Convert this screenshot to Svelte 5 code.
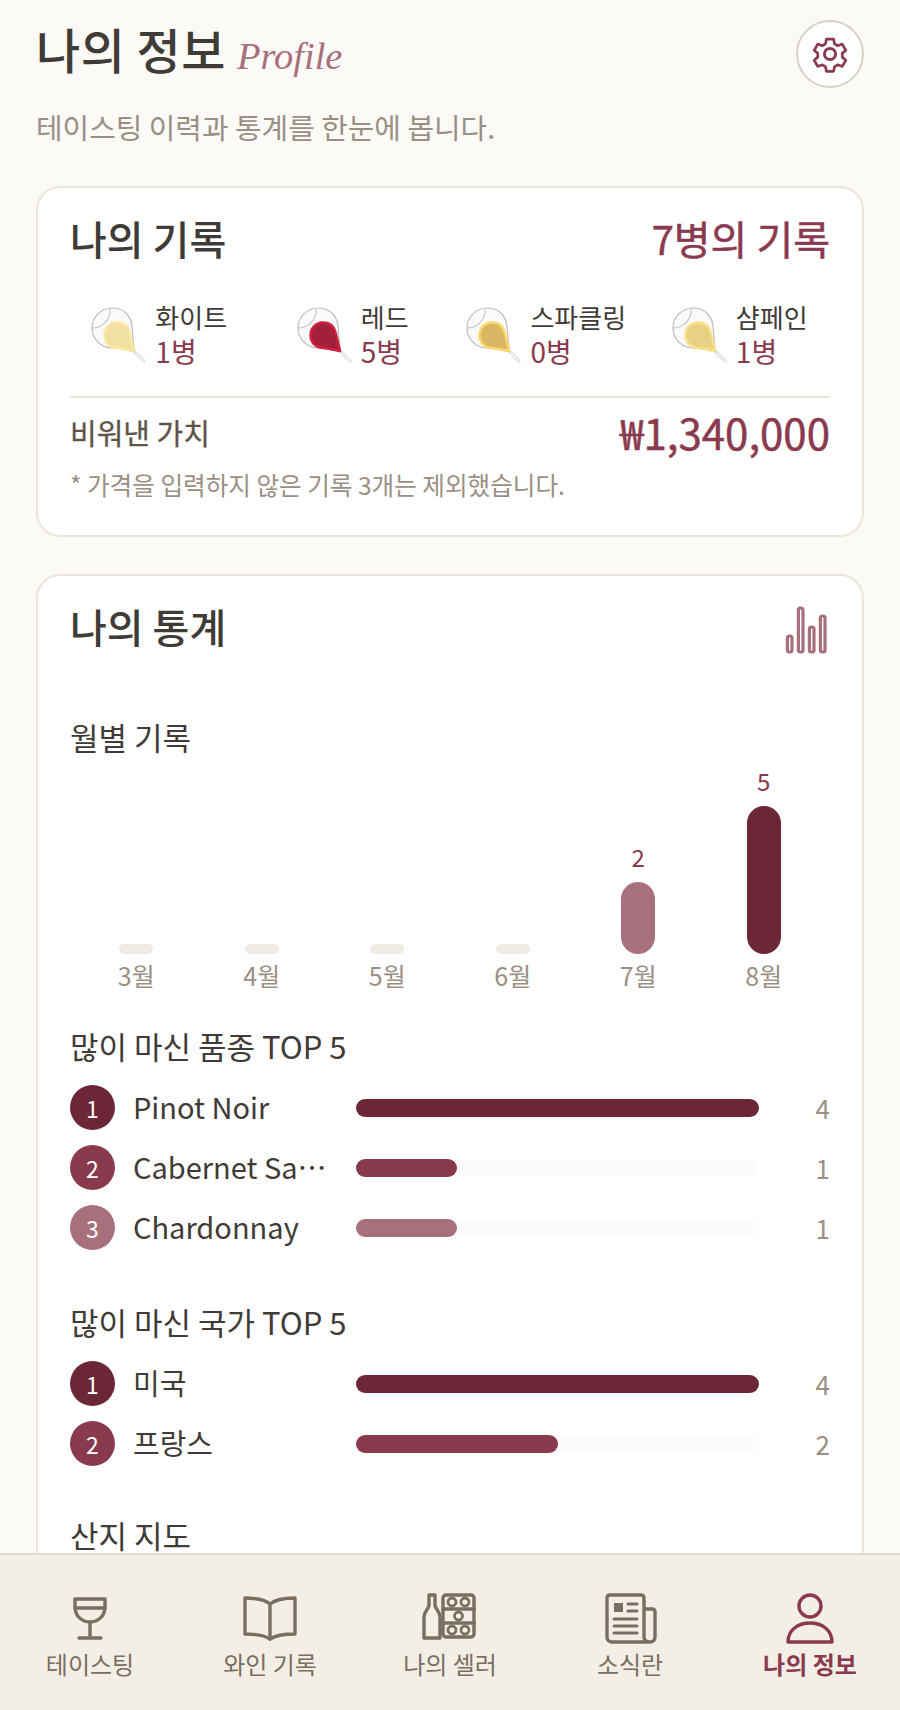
<script lang="ts">
    const WINES = [
        { name: '화이트', count: 1, fill: '#f2dfa4', edge: '#fde7a0' },
        { name: '레드', count: 5, fill: '#a31f3a', edge: '#d1213f' },
        { name: '스파클링', count: 0, fill: '#d9b864', edge: '#fdd76a' },
        { name: '샴페인', count: 1, fill: '#e8d184', edge: '#fbe08a' },
    ];

    const MONTHS = [
        { label: '3월', value: 0 },
        { label: '4월', value: 0 },
        { label: '5월', value: 0 },
        { label: '6월', value: 0 },
        { label: '7월', value: 2, height: 72, tone: 'light' },
        { label: '8월', value: 5, height: 148, tone: 'dark' },
    ];

    const VARIETIES = [
        { name: 'Pinot Noir', count: 4, pct: 100 },
        { name: 'Cabernet Sauvignon', count: 1, pct: 25 },
        { name: 'Chardonnay', count: 1, pct: 25 },
    ];

    const COUNTRIES = [
        { name: '미국', count: 4, pct: 100 },
        { name: '프랑스', count: 2, pct: 50 },
    ];

    const TABS = ['테이스팅', '와인 기록', '나의 셀러', '소식란', '나의 정보'];
</script>

{#snippet rankRows(rows)}
    <div class="rank-list">
        {#each rows as row, i}
            <div class="rank-row">
                <span class="rank-num r{i + 1}">{i + 1}</span>
                <span class="rank-name">{row.name}</span>
                <div class="track"><div class="fill r{i + 1}" style="width: {row.pct}%"></div></div>
                <span class="rank-count">{row.count}</span>
            </div>
        {/each}
    </div>
{/snippet}

<div class="screen">
    <main class="content">
        <header class="page-head">
            <div class="title-row">
                <h1>나의 정보</h1>
                <span class="title-en">Profile</span>
            </div>
            <button class="gear" aria-label="설정">
                <svg width="40" height="40" viewBox="0 0 40 40" fill="none" stroke="#8a3a4e" stroke-width="3" stroke-linejoin="round">
                    <path d="M16 3.5h8l1 5.2 3.6 2.1 5-1.8 4 6.9-4 3.4v4.2l4 3.4-4 6.9-5-1.8-3.6 2.1-1 5.2h-8l-1-5.2-3.6-2.1-5 1.8-4-6.9 4-3.4v-4.2l-4-3.4 4-6.9 5 1.8 3.6-2.1z" transform="translate(2 2) scale(.9)" />
                    <circle cx="20" cy="20" r="5.5" />
                </svg>
            </button>
        </header>
        <p class="subtitle">테이스팅 이력과 통계를 한눈에 봅니다.</p>

        <section class="card record">
            <div class="card-head">
                <h2>나의 기록</h2>
                <span class="total">7병의 기록</span>
            </div>
            <div class="wine-row">
                {#each WINES as wine}
                    <div class="wine">
                        <svg class="glass" width="64" height="64" viewBox="0 0 64 64" fill="none">
                            <path d="M47 48L56 57" stroke="#cfcfcf" stroke-width="3" stroke-linecap="round" />
                            <path d="M47 48L56 57" stroke="#fff" stroke-width="1.2" stroke-linecap="round" />
                            <path d="M47 48C38 46 32 44 24 44C13 44 4 35 4 24C4 13 13 4 24 4C36 4 43 12 44 22C45 32 45 40 47 48Z" fill="#fafafa" stroke="#bdbdbd" stroke-width="1.2" />
                            <path d="M22 5C23 16 14 24 4 24" stroke="#c4c4c4" stroke-width="1.1" />
                            <path d="M46 47C41 46 35 44.5 29 44C21 43.5 16.5 38 16.5 31C16.5 24 22 18.5 29 18.5C36 18.5 40.5 23 42 30C43.5 36 45 42 46 47Z" fill={wine.fill} stroke={wine.edge} stroke-width="2.4" stroke-linejoin="round" />
                        </svg>
                        <div class="wine-text">
                            <span class="wine-name">{wine.name}</span>
                            <span class="wine-count">{wine.count}병</span>
                        </div>
                    </div>
                {/each}
            </div>
            <div class="worth">
                <span class="worth-label">비워낸 가치</span>
                <span class="worth-value">₩1,340,000</span>
            </div>
            <p class="note">* 가격을 입력하지 않은 기록 3개는 제외했습니다.</p>
        </section>

        <section class="card stats">
            <div class="card-head">
                <h2>나의 통계</h2>
                <svg class="stats-icon" width="42" height="48" viewBox="0 0 42 48" fill="none" stroke="#a86f7d" stroke-width="3.2">
                    <rect x="2.4" y="30" width="4.6" height="16" rx="2" />
                    <rect x="13.4" y="2" width="4.6" height="44" rx="2" />
                    <rect x="24.4" y="21" width="4.6" height="25" rx="2" />
                    <rect x="35.4" y="10" width="4.6" height="36" rx="2" />
                </svg>
            </div>

            <h3 class="monthly-title">월별 기록</h3>
            <div class="chart">
                {#each MONTHS as m}
                    <div class="month">
                        {#if m.value}
                            <span class="month-value">{m.value}</span>
                            <div class="bar {m.tone}" style="height: {m.height}px"></div>
                        {:else}
                            <div class="bar empty"></div>
                        {/if}
                        <span class="month-label">{m.label}</span>
                    </div>
                {/each}
            </div>

            <h3 class="rank-title">많이 마신 품종 TOP 5</h3>
            {@render rankRows(VARIETIES)}

            <h3 class="rank-title second">많이 마신 국가 TOP 5</h3>
            {@render rankRows(COUNTRIES)}

            <h3 class="map-title">산지 지도</h3>
        </section>
    </main>

    <nav class="tabbar">
        {#each TABS as tab, i}
            <div class="tab" class:active={i === 4}>
                <svg width="56" height="56" viewBox="0 0 56 56" fill="none" stroke="currentColor" stroke-width="3.4" stroke-linecap="round" stroke-linejoin="round">
                    {#if i === 0}
                        <path d="M13 9H43V17C43 26 36 32 28 32C20 32 13 26 13 17Z" />
                        <path d="M13 18H43M28 32V48M17 48H39" />
                    {:else if i === 1}
                        <path d="M28 14C22 9 12 8 3 8V44C13 44 22 45 28 49C34 45 43 44 53 44V8C44 8 34 9 28 14Z" />
                        <path d="M28 14V49" />
                    {:else if i === 2}
                        <path d="M7 5H13V15C13 19 18 21 18 27V48H2V27C2 21 7 19 7 15Z" />
                        <rect x="21" y="5" width="31" height="42" rx="3" />
                        <path d="M21 19H52M21 33H52" />
                        <g stroke-width="2.8">
                            <circle cx="30" cy="12" r="4" /><circle cx="43" cy="12" r="4" />
                            <circle cx="36.5" cy="26" r="4" />
                            <circle cx="30" cy="40" r="4" /><circle cx="43" cy="40" r="4" />
                        </g>
                    {:else if i === 3}
                        <path d="M42 19H50C52 19 53 20 53 22V47C53 50 51 52 48 52H10C7 52 5 50 5 47V8C5 6 6 5 8 5H39C41 5 42 6 42 8V47C42 50 44 52 48 52" />
                        <rect x="12" y="13" width="9" height="9" fill="currentColor" stroke="none" />
                        <path d="M26 14H35M26 21H35M12 29H35M12 36H35M12 43H35" stroke-width="3" />
                    {:else}
                        <circle cx="28" cy="16" r="11" />
                        <path d="M6 52C6 40 16 33 28 33C40 33 50 40 50 52Z" />
                    {/if}
                </svg>
                <span>{tab}</span>
            </div>
        {/each}
    </nav>
</div>

<style>
    :global(body) {
        margin: 0;
        background: #fcfaf7;
    }

    .screen {
        width: 900px;
        height: 1710px;
        display: flex;
        flex-direction: column;
        overflow: hidden;
        background: #fcfaf7;
        font-family: "Noto Sans CJK KR", "Noto Sans", sans-serif;
        color: #3f3b37;
    }

    .content {
        flex: 1;
        min-height: 0;
        overflow: hidden;
        padding: 20px 36px 0;
    }

    .page-head {
        display: flex;
        justify-content: space-between;
        align-items: center;
    }

    .title-row {
        display: flex;
        align-items: baseline;
        gap: 11px;
        margin-bottom: 10px;
    }

    h1 {
        margin: 0;
        font-size: 48px;
        font-weight: 500;
        line-height: 56px;
        letter-spacing: 0.5px;
    }

    .title-en {
        font-family: "Liberation Serif", serif;
        font-style: italic;
        font-size: 38.5px;
        color: #a86f7d;
    }

    .gear {
        width: 68px;
        height: 68px;
        display: flex;
        align-items: center;
        justify-content: center;
        padding: 0;
        border-radius: 50%;
        border: 2px solid #d8d1c6;
        background: #fff;
    }

    .subtitle {
        margin: 20px 0 0;
        font-size: 28.9px;
        line-height: 36px;
        color: #9a8f84;
    }

    .card {
        border: 2px solid #ebe5da;
        border-radius: 24px;
        background: #fff;
        padding: 0 32px;
    }

    .record {
        margin-top: 42px;
        height: 351px;
        box-sizing: border-box;
        padding-top: 26px;
    }

    .stats {
        margin-top: 37px;
        padding-top: 26px;
        padding-bottom: 200px;
    }

    .card-head {
        display: flex;
        justify-content: space-between;
        align-items: center;
        height: 48px;
    }

    h2 {
        margin: 0;
        font-size: 40px;
        font-weight: 500;
        line-height: 48px;
    }

    .total {
        font-size: 40px;
        font-weight: 400;
        -webkit-text-stroke: 0.5px #8a3a4e;
        color: #8a3a4e;
    }

    .stats-icon {
        margin-top: 8px;
        margin-right: 3px;
    }

    .wine-row {
        display: grid;
        grid-template-columns: repeat(4, 1fr);
        justify-items: center;
        margin: 38px -5px 0 -9px;
        height: 96px;
    }

    .wine {
        display: flex;
        align-items: flex-start;
        gap: 3px;
    }

    .glass {
        margin-top: 4px;
    }

    .wine-text {
        display: flex;
        flex-direction: column;
    }

    .wine-name {
        font-size: 26px;
        line-height: 34px;
        white-space: nowrap;
        color: #3f3b37;
    }

    .wine-count {
        font-size: 28px;
        line-height: 34px;
        color: #8a3a4e;
    }

    .worth {
        display: flex;
        justify-content: space-between;
        align-items: center;
        border-top: 2px solid #ebe5da;
        padding-top: 3px;
    }

    .worth-label {
        font-size: 29px;
        font-weight: 400;
        -webkit-text-stroke: 0.3px #5f534a;
        color: #5f534a;
    }

    .worth-value {
        font-size: 42px;
        font-weight: 400;
        -webkit-text-stroke: 0.5px #8a3a4e;
        color: #8a3a4e;
    }

    .note {
        margin: 6px 0 0;
        font-size: 24.6px;
        line-height: 32px;
        color: #9a8f84;
    }

    h3 {
        font-size: 31px;
        font-weight: 400;
        line-height: 40px;
        margin: 0;
    }

    .monthly-title {
        margin-top: 67px;
    }

    .chart {
        display: grid;
        grid-template-columns: repeat(6, 1fr);
        align-items: end;
        height: 235px;
        padding: 0 3.5px;
    }

    .month {
        display: flex;
        flex-direction: column;
        align-items: center;
    }

    .month-value {
        font-size: 24px;
        line-height: 32px;
        margin-bottom: 9px;
        color: #8a3a4e;
    }

    .bar {
        width: 34px;
        border-radius: 17px;
    }

    .bar.empty {
        height: 10px;
        border-radius: 5px;
        background: #efeae2;
    }

    .bar.light {
        background: #a86f7d;
    }

    .bar.dark {
        background: #6b2737;
    }

    .month-label {
        margin-top: 4px;
        font-size: 25px;
        line-height: 34px;
        color: #9a8f84;
    }

    .rank-title {
        margin-top: 34px;
    }

    .rank-title.second {
        margin-top: 52px;
    }

    .map-title {
        margin-top: 49px;
    }

    .rank-list {
        display: flex;
        flex-direction: column;
        gap: 15px;
        margin-top: 19px;
    }

    .rank-row {
        display: flex;
        align-items: center;
        height: 45px;
    }

    .rank-num {
        flex: none;
        width: 45px;
        height: 45px;
        display: flex;
        align-items: center;
        justify-content: center;
        border-radius: 50%;
        color: #fff;
        font-size: 23px;
    }

    .rank-name {
        flex: none;
        width: 198px;
        margin-left: 18px;
        padding-bottom: 3px;
        white-space: nowrap;
        overflow: hidden;
        text-overflow: ellipsis;
        font-size: 29px;
    }

    .track {
        flex: none;
        width: 403px;
        height: 18px;
        margin-left: 25px;
        border-radius: 9px;
        background: #fcfbf9;
    }

    .fill {
        height: 100%;
        border-radius: 9px;
    }

    .r1 {
        background: #6b2737;
    }

    .r2 {
        background: #8a3a4e;
    }

    .r3 {
        background: #a86f7d;
    }

    .rank-count {
        flex: 1;
        text-align: right;
        font-size: 26px;
        color: #9a8f84;
    }

    .tabbar {
        flex: none;
        height: 157px;
        box-sizing: border-box;
        display: grid;
        grid-template-columns: repeat(5, 1fr);
        padding-top: 35px;
        border-top: 2px solid #e0d9cc;
        background: #f3eee6;
    }

    .tab {
        display: flex;
        flex-direction: column;
        align-items: center;
        color: #7a6e60;
        font-size: 24px;
        line-height: 36px;
    }

    .tab.active {
        color: #8a3a4e;
        font-weight: 700;
    }
</style>
